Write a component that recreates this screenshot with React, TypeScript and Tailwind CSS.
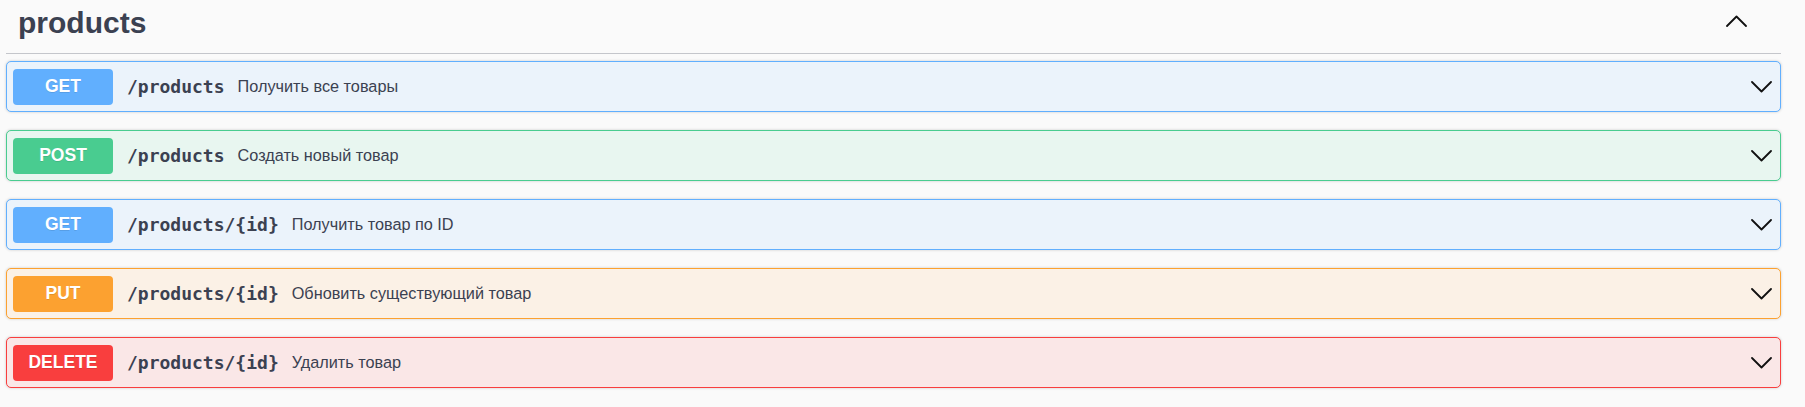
import React from 'react'

type Op = {
  method: string
  path: string
  summary: string
  badge: string
  row: string
}

const ops: Op[] = [
  { method: 'GET', path: '/products', summary: 'Получить все товары', badge: 'bg-[#61affe]', row: 'bg-[#ebf3fb] border-[#61affe]' },
  { method: 'POST', path: '/products', summary: 'Создать новый товар', badge: 'bg-[#49cc90]', row: 'bg-[#e8f6f0] border-[#49cc90]' },
  { method: 'GET', path: '/products/{id}', summary: 'Получить товар по ID', badge: 'bg-[#61affe]', row: 'bg-[#ebf3fb] border-[#61affe]' },
  { method: 'PUT', path: '/products/{id}', summary: 'Обновить существующий товар', badge: 'bg-[#fca130]', row: 'bg-[#fbf1e6] border-[#fca130]' },
  { method: 'DELETE', path: '/products/{id}', summary: 'Удалить товар', badge: 'bg-[#f93e3e]', row: 'bg-[#fae7e7] border-[#f93e3e]' },
]

function Chevron({ up = false }: { up?: boolean }) {
  return (
    <svg width="21" height="12" viewBox="0 0 21 12" fill="none" stroke="#111" strokeWidth={1.8} strokeLinecap="round" strokeLinejoin="round">
      {up ? <polyline points="1,11 10.5,1.5 20,11" /> : <polyline points="1,1 10.5,10.5 20,1" />}
    </svg>
  )
}

function App() {
  return (
    <div className="min-h-screen w-full bg-[#fafafa] pl-[6px] pr-[24px] font-['Liberation_Sans',Arial,sans-serif] text-[#3b4151]">
      {/* Tag header */}
      <div className="flex h-[54px] items-start justify-between border-b border-[#c4c6cb]">
        <h3 className="pl-[12px] pt-[8px] text-[30px] font-bold leading-[29px]">products</h3>
        <div className="mr-[34px] mt-[15px]">
          <Chevron up />
        </div>
      </div>

      {/* Operations */}
      <div className="mt-[7px] flex flex-col gap-[18px]">
        {ops.map((op, i) => (
          <div
            key={i}
            className={`flex h-[51px] items-center rounded-[5px] border p-[6px] shadow-[0_0_3px_rgba(0,0,0,0.19)] ${op.row}`}
          >
            <span
              className={`flex h-[36px] w-[100px] shrink-0 items-center justify-center rounded-[4px] text-[17.5px] font-bold text-white [text-shadow:0_1px_0_rgba(0,0,0,0.1)] ${op.badge}`}
            >
              {op.method}
            </span>
            <span className="ml-[14px] font-['DejaVu_Sans_Mono',monospace] text-[18px] font-bold">{op.path}</span>
            <span className="ml-[13px] text-[16.25px]">{op.summary}</span>
            <div className="ml-auto mr-[2px] mt-[1px]">
              <Chevron />
            </div>
          </div>
        ))}
      </div>
    </div>
  )
}

export default App
